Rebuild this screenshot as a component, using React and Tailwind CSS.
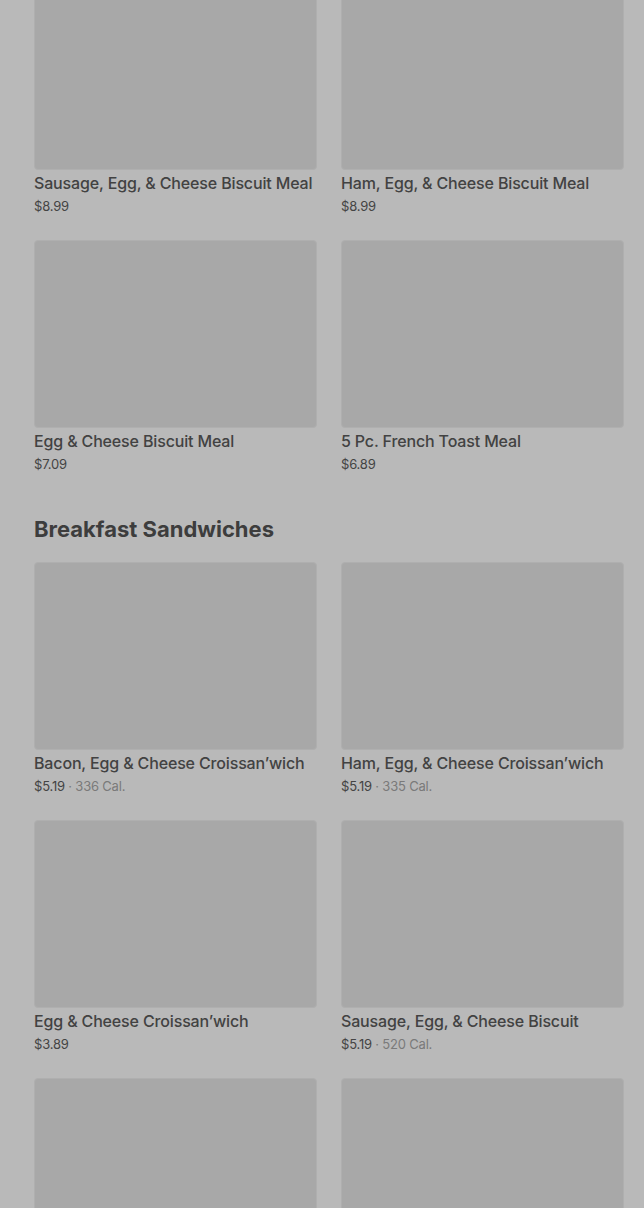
const breakfastMeals = [
  { name: "Sausage, Egg, & Cheese Biscuit Meal", price: "$8.99" },
  { name: "Ham, Egg, & Cheese Biscuit Meal", price: "$8.99" },
  { name: "Egg & Cheese Biscuit Meal", price: "$7.09" },
  { name: "5 Pc. French Toast Meal", price: "$6.89" },
];

const sandwiches = [
  { name: "Bacon, Egg & Cheese Croissan’wich", price: "$5.19", cal: "336 Cal." },
  { name: "Ham, Egg, & Cheese Croissan’wich", price: "$5.19", cal: "335 Cal." },
  { name: "Egg & Cheese Croissan’wich", price: "$3.89" },
  { name: "Sausage, Egg, & Cheese Biscuit", price: "$5.19", cal: "520 Cal." },
  { name: "", price: "" },
  { name: "", price: "" },
];

function ItemCard({ item }) {
  return (
    <div className="flex flex-col">
      <div className="h-[188px] w-full rounded-[4px] border border-[#afafaf] bg-[#a8a8a8]" />
      {item.name && (
        <p className="mt-[3px] whitespace-nowrap text-[16px] font-medium leading-5 tracking-[-0.15px] text-[#424242]">
          {item.name}
        </p>
      )}
      {item.price && (
        <p className="mt-[4px] text-[13px] leading-[18px] tracking-[-0.2px] text-[#444]">
          {item.price}
          {item.cal && <span className="text-[#7a7a7a]"> · {item.cal}</span>}
        </p>
      )}
    </div>
  );
}

export default function App() {
  return (
    <div
      className="min-h-[1208px] overflow-hidden bg-[#b9b9b9] pl-[34px] pr-[20px]"
      style={{ fontFamily: "Inter, 'Noto Sans', sans-serif" }}
    >
      <div className="-mt-[18px] grid grid-cols-2 gap-x-[24px] gap-y-[25px]">
        {breakfastMeals.map((item) => (
          <ItemCard key={item.name} item={item} />
        ))}
      </div>

      <h2 className="mt-[42px] mb-[19px] text-[22px] font-bold leading-7 text-[#3d3d3d]">
        Breakfast Sandwiches
      </h2>

      <div className="grid grid-cols-2 gap-x-[24px] gap-y-[25px]">
        {sandwiches.map((item, i) => (
          <ItemCard key={i} item={item} />
        ))}
      </div>
    </div>
  );
}
